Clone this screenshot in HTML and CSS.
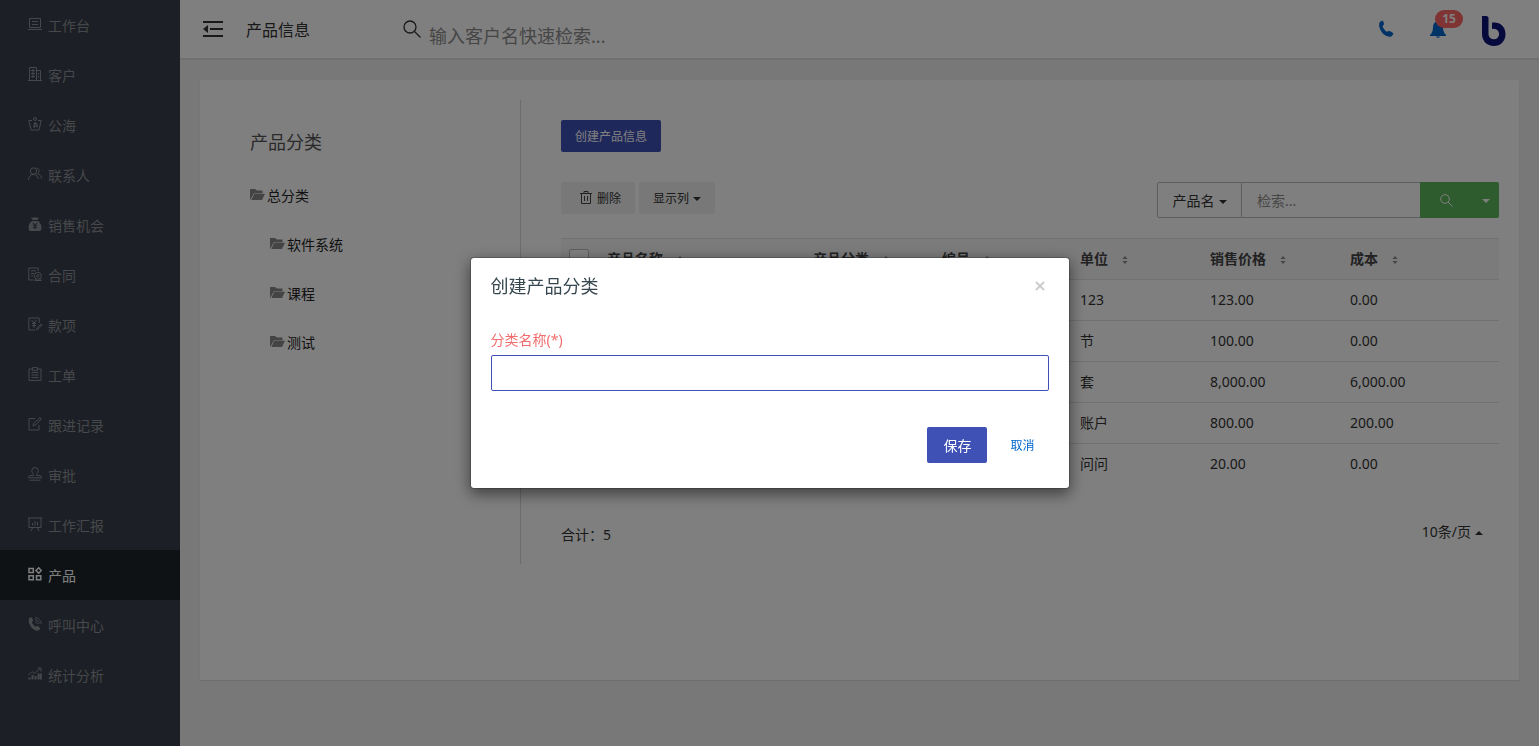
FILE: index.html
```html
<!DOCTYPE html>
<html lang="zh-CN">
<head>
<meta charset="utf-8">
<title>产品信息</title>
<link rel="stylesheet" href="styles.css">
</head>
<body>
<div class="app">
  <nav class="sidebar">
    <a class="nav-item" href="#"><svg class="ico" viewBox="0 0 14 14"><path d="M1.500 1.500h11v9h-11zM0 12.500h14M4 4.500h6M4 7.500h6"/></svg>工作台</a>
    <a class="nav-item" href="#"><svg class="ico" viewBox="0 0 14 14"><path d="M1.500 13V.5h7v12.500M8.500 3.500h4v9.500M0 13.500h14M3 3.500h4M3 6.500h4M3 9.500h4M5 2v9M10.500 6v1.500M10.500 9v1.500"/></svg>客户</a>
    <a class="nav-item" href="#"><svg class="ico" viewBox="0 0 14 14"><path d="M4 3.500H.8L3 13h8l2.200-9.500H10M5.500 6.500H9M5 9h4.500M7.500 5L6 11M9 7v3.500"/><circle cx="7" cy="2" r="1.500"/></svg>公海</a>
    <a class="nav-item" href="#"><svg class="ico" viewBox="0 0 14 14"><circle cx="5.500" cy="4" r="3.200"/><path d="M.6 13c0-3.500 2-5.500 4.900-5.500s4.500 2 4.700 4.500M8.500 1.200c3 0 3.500 4.300 1 5.600 2.600.7 3.800 2.500 4 4.700"/></svg>联系人</a>
    <a class="nav-item" href="#"><svg class="ico solid" viewBox="0 0 14 14"><path fill-rule="evenodd" d="M3 0l2 1 2-1 2 1 2-1-1.500 3h-5zM4 4h6c2.500 2 4 4.500 3.300 8 0 1.500-1 2-2.300 2H3c-1.300 0-2.300-.5-2.300-2C0 8.500 1.500 6 4 4zM4.500 6l1.500 2.300H4.800v.8h1.600v.8H4.800v.8h1.600V12h1.200v-1.300h1.600v-.8H7.600v-.8h1.600v-.8H8L9.500 6H8.300L7 8 5.700 6z"/></svg>销售机会</a>
    <a class="nav-item" href="#"><svg class="ico" viewBox="0 0 14 14"><path d="M6 13H.8V1h9.400v3M3 3.800h5M3 6.500h3M3 9h2M11.500 12l1.800 1.500H7l1-1.500"/><circle cx="9.800" cy="8.800" r="3.500"/><circle cx="9.800" cy="8.800" r="1.200"/></svg>合同</a>
    <a class="nav-item" href="#"><svg class="ico" viewBox="0 0 14 14"><path d="M7 13H.8V1h10.400v5M3.500 3L6 6l2.500-3M6 6v5M4 6.500h4M4 8.500h4M8.500 13l.6-2.200L13 7l1 1-4 4z"/></svg>款项</a>
    <a class="nav-item" href="#"><svg class="ico" viewBox="0 0 14 14"><path d="M4 2H1v11.400h12V2h-3M4.500.6h5v2.800h-5zM3.500 5.500h7M3.500 8h7M3.500 10.500h7"/></svg>工单</a>
    <a class="nav-item" href="#"><svg class="ico" viewBox="0 0 14 14"><path d="M7 1.500H1v11.500h10V8M5 9l.7-2.700L12 .6l1.300 1.200L7.500 8z"/></svg>跟进记录</a>
    <a class="nav-item" href="#"><svg class="ico" viewBox="0 0 14 14"><path d="M5.500 8.500C6 7 3.800 6 3.800 3.800a3.200 3.200 0 0 1 6.400 0C10.200 6 8 7 8.500 8.500h3.300c1.200 0 1.700.8 1.700 2.300H.5c0-1.500.5-2.300 1.700-2.300zM1.500 13.200h11"/></svg>审批</a>
    <a class="nav-item" href="#"><svg class="ico" viewBox="0 0 14 14"><path d="M0 1h14M1 1v9.500h12V1M4.500 11L3 14M9.500 11l1.500 3M4.500 6v2.500M7 4v4.500M9.500 5v3.500"/></svg>工作汇报</a>
    <a class="nav-item active" href="#"><svg class="ico bold" viewBox="0 0 14 14"><path d="M1 1.500h4.300v4H1zM1 8.800h4.300v4H1zM8.500 8.800h4.300v4H8.500zM10.700.8l2.600 2.700-2.600 2.700L8 3.500z"/></svg>产品</a>
    <a class="nav-item" href="#"><svg class="ico" viewBox="0 0 14 14"><path class="solid" d="M1.500.8L3.500.2 5.300 3.500 3.900 5c.7 2.300 1.900 3.700 3.700 4.700l1.700-1 2.900 2.300c-.3 1.700-1.200 2.700-2.900 2.700C4.500 13.500-1.500 5.500 1.500.8z"/><path d="M7 .8c3.500 0 6.200 2.700 6.200 6.200M7 2.900c2.300 0 4.100 1.800 4.100 4.100M7 5c1.200 0 2 .8 2 2"/></svg>呼叫中心</a>
    <a class="nav-item" href="#"><svg class="ico" viewBox="0 0 14 14"><path d="M.5 8L4 4.500l2.500 2L12 1.500M9.500 1H13v3.500"/><path class="wide" d="M1.500 12.500v-2M4.500 12.500V8M7.500 12.500V9M10.500 12.500V6.500M12.800 12.500v-6"/></svg>统计分析</a>
  </nav>

  <div class="main">
    <header class="topbar">
      <button class="icon-btn" type="button" aria-label="收起菜单"><svg width="20" height="16" viewBox="0 0 20 16"><path d="M0 1h20M7 8h13M0 15h20" fill="none" stroke="#333" stroke-width="2"/><path d="M5 4v8L0 8z" fill="#333"/></svg></button>
      <h1 class="page-title">产品信息</h1>
      <label class="quick-search">
        <svg width="18" height="18" viewBox="0 0 18 18" fill="none" stroke="#333" stroke-width="1.300"><circle cx="7" cy="7" r="6"/><path d="M11.500 11.500L17.500 17.500"/></svg>
        <input type="text" placeholder="输入客户名快速检索..." aria-label="输入客户名快速检索">
      </label>
      <div class="top-actions">
        <button class="icon-btn" type="button" aria-label="电话"><svg width="16" height="18" viewBox="0 0 16 18" fill="#06c"><path d="M1.500 2.500L4 .5c1.600.8 2.200 2.600 1.800 4.200L4.500 6.300c.8 2.300 2.100 4 4.100 5.500l2.200-.8c2 .3 3.900 1.300 4.700 3L13 16.800C6.500 17.500-.5 9.500 1.500 2.500z"/></svg></button>
        <button class="icon-btn bell" type="button" aria-label="通知"><svg width="18" height="18" viewBox="0 0 18 18" fill="#06c"><path d="M8 0h2v1.500c3 .5 4 3 4 6 0 3.500 1 5.500 3 7.500v1H1v-1c2-2 3-4 3-7.500 0-3 1-5.500 4-6zM7 16.500h4c-.5 1.800-3.500 1.800-4 0z"/></svg><span class="badge">15</span></button>
        <a class="logo" href="#" aria-label="主页"><svg width="24" height="30" viewBox="0 0 24 30"><path d="M0 0h5l1.500 1.500v17a5.300 5.300 0 1 0 5.500-5.800l-2 .3V6.800c7.500-1.300 13.500 3.700 13.500 11.200S18.500 30 11.800 30 0 25 0 18z" fill="#0c1277"/></svg></a>
      </div>
    </header>

    <main class="card">
      <section class="tree">
        <h2 class="tree-title">产品分类</h2>
        <ul class="tree-list">
          <li><a class="tree-root" href="#"><svg class="folder" viewBox="0 0 15 12"><path d="M0 0h5l2 1.500h5.500v2.700H4L1 9.500 0 11zM4.300 4.800H15l-3 6.200H1.300z"/></svg>总分类</a></li>
          <li><a class="tree-child" href="#"><svg class="folder" viewBox="0 0 15 12"><path d="M0 0h5l2 1.500h5.500v2.700H4L1 9.500 0 11zM4.300 4.800H15l-3 6.200H1.300z"/></svg>软件系统</a></li>
          <li><a class="tree-child" href="#"><svg class="folder" viewBox="0 0 15 12"><path d="M0 0h5l2 1.500h5.500v2.700H4L1 9.500 0 11zM4.300 4.800H15l-3 6.200H1.300z"/></svg>课程</a></li>
          <li><a class="tree-child" href="#"><svg class="folder" viewBox="0 0 15 12"><path d="M0 0h5l2 1.500h5.500v2.700H4L1 9.500 0 11zM4.300 4.800H15l-3 6.200H1.300z"/></svg>测试</a></li>
        </ul>
      </section>

      <section class="content">
        <button class="btn primary" type="button">创建产品信息</button>
        <div class="toolbar">
          <div class="tool-left">
            <button class="btn delete" type="button"><svg width="12" height="14" viewBox="0 0 12 14" fill="none" stroke="#444"><path d="M0 2.500h12M4 2V.5h4V2M1.500 3v9.500h9V3M4.500 5v5M7.500 5v5"/></svg>删除</button>
            <button class="btn" type="button">显示列<span class="caret"></span></button>
          </div>
          <div class="search-group">
            <button class="field-btn" type="button">产品名<span class="caret"></span></button>
            <input class="search-input" type="text" placeholder="检索..." aria-label="检索">
            <button class="go" type="button" aria-label="搜索"><svg width="13" height="13" viewBox="0 0 13 13" fill="none" stroke="#fff"><circle cx="5" cy="5" r="4.300"/><path d="M8 8l4.500 4.500"/></svg></button>
            <button class="go more" type="button" aria-label="更多"><span class="caret"></span></button>
          </div>
        </div>
        <table class="grid">
          <colgroup><col class="c-check"><col class="c-name"><col class="c-cat"><col class="c-no"><col class="c-unit"><col class="c-price"><col></colgroup>
          <thead>
            <tr>
              <th><input class="check" type="checkbox" aria-label="全选"></th>
              <th>产品名称<svg class="sort" viewBox="0 0 6 8"><path d="M3 0l2.500 3h-5zM3 8L.5 5h5z"/></svg></th>
              <th>产品分类<svg class="sort" viewBox="0 0 6 8"><path d="M3 0l2.500 3h-5zM3 8L.5 5h5z"/></svg></th>
              <th>编号<svg class="sort" viewBox="0 0 6 8"><path d="M3 0l2.500 3h-5zM3 8L.5 5h5z"/></svg></th>
              <th>单位<svg class="sort" viewBox="0 0 6 8"><path d="M3 0l2.500 3h-5zM3 8L.5 5h5z"/></svg></th>
              <th>销售价格<svg class="sort" viewBox="0 0 6 8"><path d="M3 0l2.500 3h-5zM3 8L.5 5h5z"/></svg></th>
              <th>成本<svg class="sort" viewBox="0 0 6 8"><path d="M3 0l2.500 3h-5zM3 8L.5 5h5z"/></svg></th>
            </tr>
          </thead>
          <tbody>
            <tr><td></td><td></td><td></td><td></td><td>123</td><td>123.00</td><td>0.00</td></tr>
            <tr><td></td><td></td><td></td><td></td><td>节</td><td>100.00</td><td>0.00</td></tr>
            <tr><td></td><td></td><td></td><td></td><td>套</td><td>8,000.00</td><td>6,000.00</td></tr>
            <tr><td></td><td></td><td></td><td></td><td>账户</td><td>800.00</td><td>200.00</td></tr>
            <tr><td></td><td></td><td></td><td></td><td>问问</td><td>20.00</td><td>0.00</td></tr>
          </tbody>
        </table>
        <div class="table-foot">
          <span class="total">合计：5</span>
          <button class="page-size" type="button">10条/页<span class="caret up"></span></button>
        </div>
      </section>
    </main>
  </div>
</div>

<div class="backdrop">
  <form class="modal" role="dialog" aria-labelledby="modal-title">
    <div class="modal-head">
      <h2 class="modal-title" id="modal-title">创建产品分类</h2>
      <button class="close" type="button" aria-label="关闭"><svg width="10" height="10" viewBox="0 0 10 10"><path d="M1 1l8 8M9 1L1 9" stroke="#ccc" stroke-width="2"/></svg></button>
    </div>
    <label class="modal-label" for="category-name">分类名称(*)</label>
    <input class="modal-input" id="category-name" type="text">
    <div class="modal-foot">
      <button class="save" type="submit">保存</button>
      <a class="cancel" href="#">取消</a>
    </div>
  </form>
</div>
</body>
</html>
```
FILE: styles.css
```css
* { box-sizing: border-box; }
body {
  margin: 0;
  background: #f0f0f0;
  color: #333;
  font: 14px/20px "Noto Sans", "Noto Sans CJK SC", sans-serif;
}
a { color: inherit; text-decoration: none; }
button, input { font: inherit; color: inherit; }
button { border: 0; padding: 0; background: none; cursor: pointer; }
h1, h2, ul { margin: 0; padding: 0; font-weight: 400; list-style: none; }

.app { display: flex; min-height: 100vh; }

/* Sidebar */
.sidebar { width: 180px; flex: none; background: #383f4a; }
.nav-item {
  display: flex;
  align-items: center;
  gap: 6px;
  height: 50px;
  padding: 2px 0 0 28px;
  color: #8c9096;
}
.nav-item.active { background: #1e2428; color: #fff; }
.ico {
  width: 14px;
  height: 14px;
  flex: none;
  margin-bottom: 4px;
  fill: none;
  stroke: currentColor;
  stroke-width: 1;
}
.ico.solid, .ico .solid { fill: currentColor; stroke: none; }
.ico.bold { stroke-width: 1.5; }
.ico .wide { stroke-width: 2; }

/* Top bar */
.main { flex: 1; min-width: 0; }
.topbar {
  display: flex;
  align-items: center;
  height: 60px;
  padding: 0 33px 0 23px;
  background: #fff;
  border-bottom: 2px solid #e0e0e0;
}
.icon-btn { display: flex; position: relative; }
.page-title { margin-left: 23px; padding-top: 2px; font-size: 16px; line-height: 24px; }
.quick-search { display: flex; align-items: center; gap: 8px; margin-left: 93px; }
.quick-search input {
  width: 240px;
  padding: 14px 0 0;
  border: 0;
  background: none;
  font-size: 18px;
  line-height: 26px;
}
::placeholder { color: #8c8c8c; opacity: 1; }
.top-actions { display: flex; align-items: center; margin-left: auto; }
.bell { margin-left: 35px; }
.badge {
  position: absolute;
  left: 6px;
  top: -10px;
  width: 28px;
  border-radius: 10px;
  background: #f66;
  color: #fff;
  font-size: 12px;
  font-weight: 700;
  line-height: 18px;
}
.logo { display: flex; margin-left: 35px; padding-top: 4px; }

/* Card */
.card {
  display: flex;
  align-items: flex-start;
  min-height: 600px;
  margin: 20px;
  padding: 20px 20px 20px 0;
  background: #fff;
  box-shadow: 0 1px 1px #ddd;
}
.tree { width: 320px; flex: none; padding: 28px 20px 0 50px; }
.tree-title { margin-bottom: 15px; color: #555; font-size: 18px; line-height: 28px; }
.tree-list a { display: flex; align-items: center; gap: 2px; height: 49px; color: #222; }
.tree-list .tree-child { padding-left: 20px; }
.folder { width: 15px; height: 12px; margin-bottom: 2px; fill: #888; }
.content { flex: 1; min-width: 0; padding: 20px 0 19px 40px; border-left: 1px solid #d8d8d8; }

.btn {
  display: inline-flex;
  align-items: center;
  height: 32px;
  padding: 2px 14px 0;
  border-radius: 2px;
  background: #f0f0f0;
  font-size: 12px;
}
.btn.primary { background: #3f51b5; color: #fff; }
.btn.delete { gap: 5px; padding-left: 19px; }
.btn.delete svg { margin-bottom: 2px; }
.caret {
  display: inline-block;
  margin-left: 4px;
  border: 4px solid transparent;
  border-top-color: currentColor;
  border-bottom: 0;
  vertical-align: middle;
}
.caret.up { border-top: 0; border-bottom: 4px solid currentColor; }
.toolbar { display: flex; justify-content: space-between; margin-top: 30px; }
.tool-left { display: flex; gap: 4px; }
.search-group { display: flex; height: 36px; }
.field-btn { width: 85px; padding-top: 2px; border: 1px solid #bbb; border-radius: 2px 0 0 2px; }
.search-input {
  width: 178px;
  padding: 2px 15px 0;
  border: 1px solid #bbb;
  border-width: 1px 0;
  background: #fff;
}
.go { display: flex; align-items: center; justify-content: center; width: 53px; background: #5cb85c; color: #fff; }
.go.more { width: 26px; border-radius: 0 2px 2px 0; }
.go.more .caret { margin: 2px 0 0; }

/* Table */
.grid { width: 100%; margin-top: 20px; border-collapse: collapse; table-layout: fixed; }
.grid th, .grid td { height: 41px; padding: 0 8px; text-align: left; border-top: 1px solid #dfe3e5; }
.grid th { background: #f6f6f9; color: #444; font-weight: 700; }
.c-check { width: 38px; }
.c-name { width: 206px; }
.c-cat { width: 129px; }
.c-no { width: 138px; }
.c-unit { width: 130px; }
.c-price { width: 140px; }
.sort { width: 6px; height: 8px; margin-left: 14px; fill: #888; }
.check {
  display: block;
  width: 20px;
  height: 20px;
  margin: 0;
  appearance: none;
  border: 1px solid #bbb;
  border-radius: 2px;
  background: #fff;
}
.table-foot { display: flex; justify-content: space-between; align-items: flex-start; margin-top: 37px; padding-right: 16px; }
.total { margin-top: 3px; }

/* Modal */
.backdrop {
  position: fixed;
  inset: 0;
  display: flex;
  align-items: center;
  justify-content: center;
  background: rgba(0, 0, 0, .5);
}
.modal {
  width: 600px;
  max-width: 100%;
  padding: 14px 20px 25px;
  border: 1px solid rgba(0, 0, 0, .2);
  border-radius: 4px;
  background: #fff;
  background-clip: padding-box;
  box-shadow: 0 5px 15px rgba(0, 0, 0, .5);
}
.modal-head { display: flex; align-items: center; justify-content: space-between; }
.modal-title { color: #37474f; font-size: 18px; line-height: 28px; }
.close { display: flex; padding: 0 4px; }
.modal-label { display: block; margin-top: 30px; color: #f26d6d; }
.modal-input {
  display: block;
  width: 100%;
  height: 36px;
  margin-top: 5px;
  padding: 0 12px;
  border: 1px solid #3f51b5;
  border-radius: 2px;
  background: #fff;
  outline: 0;
}
.modal-foot { display: flex; align-items: center; justify-content: flex-end; gap: 23px; margin-top: 36px; padding-right: 14px; }
.save { width: 60px; height: 36px; padding-top: 2px; border-radius: 2px; background: #3f51b5; color: #fff; }
.cancel { padding-top: 2px; color: #06c; font-size: 12px; }
```
